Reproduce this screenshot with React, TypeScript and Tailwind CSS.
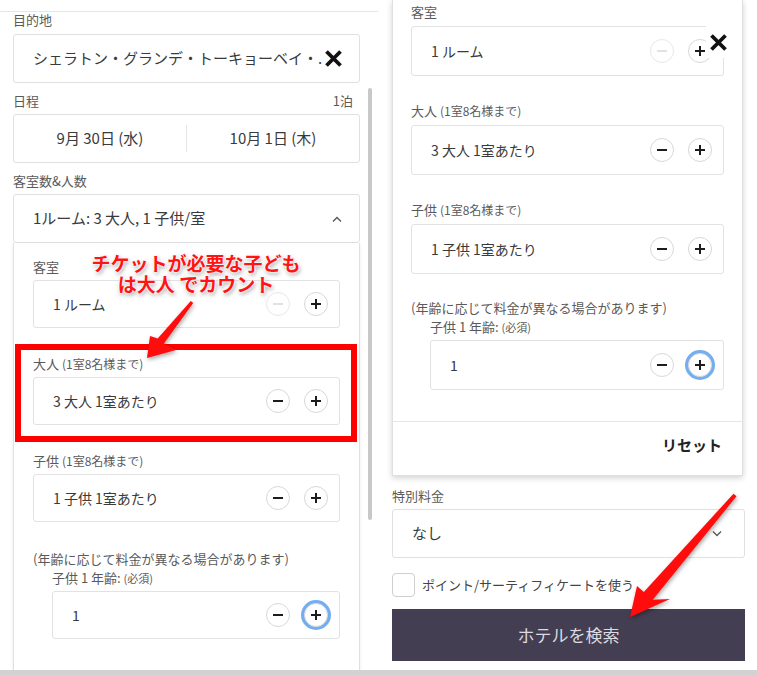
import React from 'react';
import clsx from 'clsx';

type CircleProps = {
  kind: 'minus' | 'plus';
  disabled?: boolean;
  focused?: boolean;
};

function CircleButton({ kind, disabled, focused }: CircleProps) {
  return (
    <span
      className={clsx(
        'flex h-6 w-6 items-center justify-center rounded-full border bg-white',
        disabled ? 'border-[#e8e8e8]' : 'border-[#d8d8d8]',
        focused && 'ring-[3px] ring-[#74adf0]'
      )}
    >
      <svg width="12" height="12" viewBox="0 0 12 12">
        <path
          d={kind === 'minus' ? 'M1 6h10' : 'M6 1v10M1 6h10'}
          stroke={disabled ? '#d4d4d4' : '#1c1c1c'}
          strokeWidth={disabled ? 1.4 : 2}
        />
      </svg>
    </span>
  );
}

function StepBox({
  value,
  minusDisabled,
  focused,
  h,
  className,
}: {
  value: string;
  minusDisabled?: boolean;
  focused?: boolean;
  h: string;
  className?: string;
}) {
  return (
    <div
      className={clsx(
        'flex items-center justify-between rounded-[3px] border border-[#e2e2e2] pl-[19px] pr-[11px]',
        h,
        className
      )}
    >
      <span className="text-[14px] text-[#3a3a3a]">{value}</span>
      <div className="flex items-center gap-[14px]">
        <CircleButton kind="minus" disabled={minusDisabled} />
        <CircleButton kind="plus" focused={focused} />
      </div>
    </div>
  );
}

function Label({ children, className }: { children: React.ReactNode; className?: string }) {
  return <p className={clsx('text-[13px] leading-[14px] text-[#5a5a5a]', className)}>{children}</p>;
}

function CapLabel({ name, className }: { name: string; className?: string }) {
  return (
    <Label className={className}>
      {name} <span className="text-[12px]">(1室8名様まで)</span>
    </Label>
  );
}

function BigX() {
  return (
    <svg width="19" height="19" viewBox="0 0 19 19">
      <path d="M2.5 2.5L16.5 16.5M16.5 2.5L2.5 16.5" stroke="#111" strokeWidth="3.8" />
    </svg>
  );
}

function Chevron({ up }: { up?: boolean }) {
  return (
    <svg width="10" height="6" viewBox="0 0 10 6">
      <path d={up ? 'M1 5.5L5 1.5L9 5.5' : 'M1 0.5L5 4.5L9 0.5'} stroke="#555" strokeWidth="1.3" fill="none" />
    </svg>
  );
}

function RoomSteppers({
  boxH,
  groupGap,
  labelGap,
  noteGap,
}: {
  boxH: string;
  groupGap: string;
  labelGap: string;
  noteGap: string;
}) {
  return (
    <>
      <Label>客室</Label>
      <StepBox value="1 ルーム" minusDisabled h={boxH} className={labelGap} />
      <CapLabel name="大人" className={groupGap} />
      <StepBox value="3 大人 1室あたり" h={boxH} className={labelGap} />
      <CapLabel name="子供" className={groupGap} />
      <StepBox value="1 子供 1室あたり" h={boxH} className={labelGap} />
      <Label className={noteGap}>(年齢に応じて料金が異なる場合があります)</Label>
      <Label className="ml-[19px] mt-[5px]">
        子供 1 年齢: <span className="text-[11px]">(必須)</span>
      </Label>
      <StepBox value="1" focused h={boxH} className="ml-[19px] mt-[6px]" />
    </>
  );
}

function LeftColumn() {
  return (
    <div className="w-[378px] shrink-0">
      <div className="mt-[11px] border-t border-[#e6e6e6] pl-[13px] pr-[18px]">
        <Label className="mt-px">目的地</Label>
        <div className="mt-[7px] flex h-[49px] items-center justify-between rounded-[3px] border border-[#e0e0e0] pl-[19px] pr-[16px]">
          <span className="text-[15px] text-[#3a3a3a]">シェラトン・グランデ・トーキョーベイ・.</span>
          <BigX />
        </div>

        <div className="mt-[11px] flex justify-between pr-[7px]">
          <Label>日程</Label>
          <Label>1泊</Label>
        </div>
        <div className="mt-[6px] flex h-[49px] items-center rounded-[3px] border border-[#e0e0e0] text-[15px] text-[#3a3a3a]">
          <span className="flex-1 text-center">9月 30日 (水)</span>
          <span className="h-[27px] w-px bg-[#e6e6e6]" />
          <span className="flex-1 text-center">10月 1日 (木)</span>
        </div>

        <Label className="mt-[11px]">客室数&amp;人数</Label>
        <div className="mt-[6px] flex h-[49px] items-center justify-between rounded-[3px] border border-[#e0e0e0] pl-[19px] pr-[17px]">
          <span className="text-[15px] text-[#3a3a3a]">1ルーム: 3 大人, 1 子供/室</span>
          <Chevron up />
        </div>

        <div className="border-x border-[#e0e0e0] px-[19px] pb-[40px] pt-[17px] shadow-[0_1px_3px_rgba(0,0,0,0.08)]">
          <RoomSteppers boxH="h-[48px]" groupGap="mt-[29px]" labelGap="mt-[6px]" noteGap="mt-[30px]" />
        </div>
      </div>
    </div>
  );
}

function RightColumn() {
  return (
    <div className="flex-1 pl-[14px] pr-[12px]">
      <div className="w-[351px] border-x border-b border-[#e0e0e0] bg-white shadow-[0_2px_6px_rgba(0,0,0,0.18)]">
        <div className="px-[18px] pt-[5px]">
          <RoomSteppers boxH="h-[50px]" groupGap="mt-[28px]" labelGap="mt-[7px]" noteGap="mt-[27px]" />
        </div>
        <div className="mt-[31px] border-t border-[#e6e6e6] pb-[21px] pr-[20px] pt-[14px] text-right text-[15px] font-bold leading-[18px] text-[#222]">
          リセット
        </div>
      </div>

      <Label className="mt-[13px]">特別料金</Label>
      <div className="mt-[6px] flex h-[49px] items-center justify-between rounded-[3px] border border-[#e0e0e0] pl-[19px] pr-[22px]">
        <span className="text-[15px] text-[#3a3a3a]">なし</span>
        <Chevron />
      </div>

      <div className="mt-[15px] flex items-center gap-[7px]">
        <span className="h-[24px] w-[23px] rounded-[4px] border border-[#cfcfcf]" />
        <span className="text-[13px] text-[#444]">ポイント/サーティフィケートを使う</span>
      </div>

      <div className="mt-[12px] flex h-[52px] items-center justify-center bg-[#433e51] text-[17px] text-[#dcdae2]">
        ホテルを検索
      </div>
    </div>
  );
}

function Arrows() {
  return (
    <svg className="pointer-events-none absolute inset-0" width="757" height="675" viewBox="0 0 757 675">
      <defs>
        <filter id="arrowShadow" x="-20%" y="-20%" width="140%" height="140%">
          <feDropShadow dx="1" dy="2" stdDeviation="2" floodColor="#000" floodOpacity="0.35" />
        </filter>
      </defs>
      <polygon
        points="193.2,302.9 163.9,343.4 176,350 147,358 150,336 157.7,338.4 190.8,301.1"
        fill="#ff0a0a"
        filter="url(#arrowShadow)"
      />
      <polygon
        points="736.5,496.3 652.8,599.7 670,599 630,617 637,586 643.8,591.9 733.5,493.7"
        fill="#ff0a0a"
        filter="url(#arrowShadow)"
      />
    </svg>
  );
}

export default function App() {
  return (
    <div className="relative h-[675px] w-[757px] overflow-hidden bg-white font-['Noto_Sans_CJK_JP','Noto_Sans',sans-serif]">
      <div className="flex h-[670px] overflow-hidden">
        <LeftColumn />
        <RightColumn />
      </div>
      <div className="h-[5px] bg-[#d2d2d2]" />

      {/* scrollbar of the left screenshot */}
      <div className="absolute left-[368px] top-[88px] h-[432px] w-[4px] rounded-full bg-[#c8c8c8]" />

      {/* clear button peeking over the right panel */}
      <div className="absolute left-[706px] top-[24px] flex h-[34px] w-[32px] items-start bg-white pl-[3px] pt-[9px]">
        <BigX />
      </div>

      {/* annotation */}
      <div className="absolute left-[15px] top-[344px] h-[98px] w-[342px] border-[6px] border-[#ff0000]" />
      <div className="absolute left-[86px] top-[252px] w-[220px] text-center text-[19px] font-bold leading-[21px] text-[#ff1414] [text-shadow:0_0_2px_#fff,0_0_2px_#fff,0_0_3px_#fff,1px_2px_4px_rgba(0,0,0,0.45)]">
        <div>チケットが必要な子ども</div>
        <div>は大人 でカウント</div>
      </div>
      <Arrows />
    </div>
  );
}
